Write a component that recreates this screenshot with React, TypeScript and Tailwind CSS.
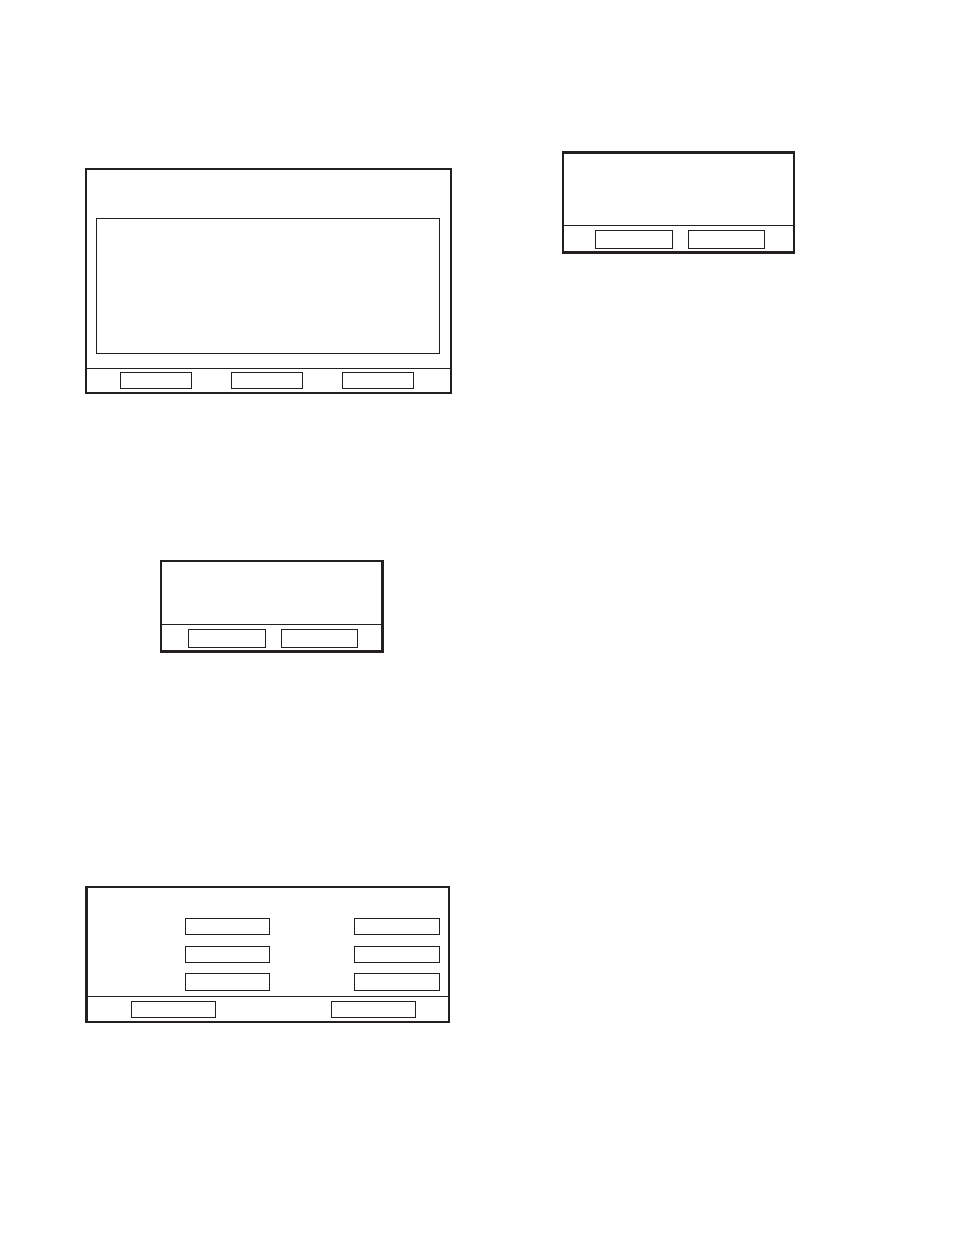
import type { ReactNode } from "react";

function Actions({ className, children }: { className: string; children: ReactNode }) {
  return <footer className={`flex border-t border-[#231f20] ${className}`}>{children}</footer>;
}

function Action({ className, label }: { className: string; label: string }) {
  return (
    <button type="button" aria-label={label} className={`block shrink-0 border border-[#231f20] ${className}`} />
  );
}

function Field({ className, label }: { className: string; label: string }) {
  return (
    <input
      type="text"
      aria-label={label}
      className={`block shrink-0 border border-[#231f20] bg-transparent px-1 text-xs outline-none ${className}`}
    />
  );
}

function ListDialog() {
  return (
    <section className="border-2 border-[#231f20] pt-12">
      <div className="mr-[10px] mb-[14px] ml-[9px] h-[136px] border border-[#231f20]" />
      <Actions className="justify-between pt-[3px] pr-[36px] pb-[3px] pl-[33px]">
        <Action label="Select" className="h-[17px] w-[72px]" />
        <Action label="Edit" className="h-[17px] w-[72px]" />
        <Action label="Close" className="h-[17px] w-[72px]" />
      </Actions>
    </section>
  );
}

function ConfirmDialog({ className }: { className: string }) {
  return (
    <section className={`border-[#231f20] ${className}`}>
      <Actions className="justify-center gap-[15px] pt-1 pb-[2px] pl-[3px]">
        <Action label="OK" className="h-[19px] w-[78px]" />
        <Action label="Cancel" className="h-[19px] w-[77px]" />
      </Actions>
    </section>
  );
}

function FormDialog() {
  return (
    <form className="mr-[2px] border-2 border-l-[3px] border-[#231f20] pt-[30px]">
      <div className="flex justify-between pr-2 pb-[5px] pl-[97px]">
        <div>
          <Field label="Field 1" className="mb-[11px] h-[17px] w-[85px]" />
          <Field label="Field 2" className="mb-[10px] h-[17px] w-[85px]" />
          <Field label="Field 3" className="h-[18px] w-[85px]" />
        </div>
        <div>
          <Field label="Field 4" className="mb-[11px] h-[17px] w-[86px]" />
          <Field label="Field 5" className="mb-[10px] h-[17px] w-[86px]" />
          <Field label="Field 6" className="h-[18px] w-[86px]" />
        </div>
      </div>
      <Actions className="justify-between pt-1 pr-8 pb-[3px] pl-[43px]">
        <Action label="Save" className="h-[17px] w-[85px]" />
        <Action label="Cancel" className="h-[17px] w-[85px]" />
      </Actions>
    </form>
  );
}

export default function App() {
  return (
    <main className="grid min-h-screen grid-cols-2 items-start bg-white font-['Liberation_Sans',sans-serif] text-[#231f20]">
      <div className="pt-[168px] pr-[25px] pb-[213px] pl-[85px]">
        <ListDialog />
        <div className="pt-[166px] pr-[68px] pb-[233px] pl-[75px]">
          <ConfirmDialog className="border-t-2 border-r-[3px] border-b-[3px] border-l-2 pt-[62px]" />
        </div>
        <FormDialog />
      </div>
      <div className="pt-[151px] pr-[159px] pl-[85px]">
        <ConfirmDialog className="border-x-2 border-y-[3px] pt-[71px]" />
      </div>
    </main>
  );
}
